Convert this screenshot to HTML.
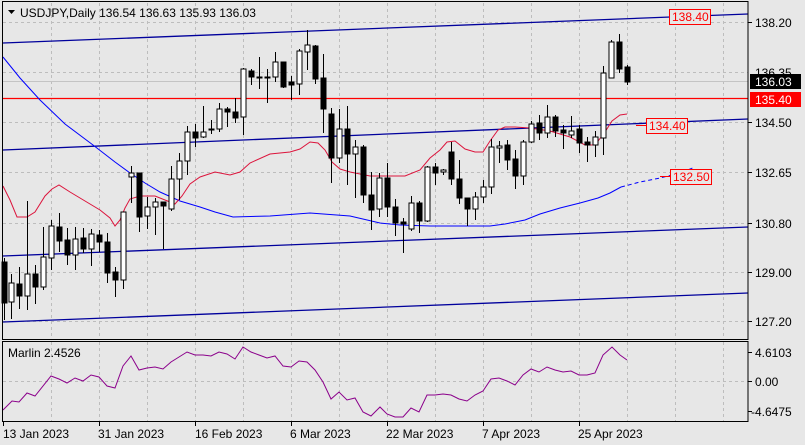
<!DOCTYPE html>
<html><head><meta charset="utf-8"><style>
html,body{margin:0;padding:0;background:#e7e7e7;}
svg{display:block;font-family:"Liberation Sans",sans-serif;}
</style></head><body>
<svg width="805" height="445" viewBox="0 0 805 445" xmlns="http://www.w3.org/2000/svg">
<rect width="805" height="445" fill="#e7e7e7"/>
<g stroke="#bdbdbd" stroke-dasharray="3,3" stroke-width="1">
<line x1="3" y1="22.5" x2="748" y2="22.5"/><line x1="3" y1="72.5" x2="748" y2="72.5"/><line x1="3" y1="122.5" x2="748" y2="122.5"/><line x1="3" y1="172.5" x2="748" y2="172.5"/><line x1="3" y1="223.5" x2="748" y2="223.5"/><line x1="3" y1="272.5" x2="748" y2="272.5"/><line x1="3" y1="321.5" x2="748" y2="321.5"/>
<line x1="3" y1="381.5" x2="748" y2="381.5"/>
<g id="vg"><line x1="51.5" y1="3" x2="51.5" y2="339"/><line x1="99.5" y1="3" x2="99.5" y2="339"/><line x1="147.5" y1="3" x2="147.5" y2="339"/><line x1="195.5" y1="3" x2="195.5" y2="339"/><line x1="243.5" y1="3" x2="243.5" y2="339"/><line x1="291.5" y1="3" x2="291.5" y2="339"/><line x1="339.5" y1="3" x2="339.5" y2="339"/><line x1="387.5" y1="3" x2="387.5" y2="339"/><line x1="435.5" y1="3" x2="435.5" y2="339"/><line x1="483.5" y1="3" x2="483.5" y2="339"/><line x1="531.5" y1="3" x2="531.5" y2="339"/><line x1="579.5" y1="3" x2="579.5" y2="339"/><line x1="627.5" y1="3" x2="627.5" y2="339"/><line x1="675.5" y1="3" x2="675.5" y2="339"/><line x1="723.5" y1="3" x2="723.5" y2="339"/></g>
<line x1="51.5" y1="342" x2="51.5" y2="421"/><line x1="99.5" y1="342" x2="99.5" y2="421"/><line x1="147.5" y1="342" x2="147.5" y2="421"/><line x1="195.5" y1="342" x2="195.5" y2="421"/><line x1="243.5" y1="342" x2="243.5" y2="421"/><line x1="291.5" y1="342" x2="291.5" y2="421"/><line x1="339.5" y1="342" x2="339.5" y2="421"/><line x1="387.5" y1="342" x2="387.5" y2="421"/><line x1="435.5" y1="342" x2="435.5" y2="421"/><line x1="483.5" y1="342" x2="483.5" y2="421"/><line x1="531.5" y1="342" x2="531.5" y2="421"/><line x1="579.5" y1="342" x2="579.5" y2="421"/><line x1="627.5" y1="342" x2="627.5" y2="421"/><line x1="675.5" y1="342" x2="675.5" y2="421"/><line x1="723.5" y1="342" x2="723.5" y2="421"/>
</g>
<line x1="3" y1="81.5" x2="748" y2="81.5" stroke="#c4c4c4"/>
<!-- channel lines -->
<g stroke="#00009c" stroke-width="1.3" fill="none">
<line x1="3" y1="43" x2="748" y2="14"/>
<line x1="3" y1="150" x2="748" y2="119"/>
<line x1="3" y1="256" x2="748" y2="227"/>
<line x1="3" y1="322" x2="748" y2="293"/>
</g>
<line x1="3" y1="98.5" x2="748" y2="98.5" stroke="#ff0000" stroke-width="1.3"/>
<!-- MA -->
<polyline fill="none" stroke="#0000ff" stroke-width="1" points="3,57 20,78 40,100 65,124 93,145 115,162 130,173 145,183 160,192 180,201 200,207 215,212 233,217 270,216 310,213 350,216 380,223 400,225 430,226 460,226 490,226 505,224 525,220 540,214 560,208 580,203 598,198 610,193 621,187"/>
<polyline fill="none" stroke="#0000ff" stroke-width="1" stroke-dasharray="4,3" points="621,187 640,182 660,178 680,173 695,167"/>
<!-- red envelope -->
<polyline fill="none" stroke="#dc143c" stroke-width="1" points="3,186 10,200 17,217 27,217 35,212 45,196 52,189 59,185 70,192 85,201 100,210 110,218 115,226 120,220 125,208 130,199 140,196 155,196 165,200 175,204 182,196 190,184 200,177 215,172 230,175 240,172 250,163 270,154 290,152 300,149 310,142 318,143 325,150 332,162 340,169 350,172 370,176 390,176 405,176 420,170 430,158 440,150 447,142 455,141 465,149 475,152 483,152 490,141 498,130 505,127 515,127 530,128 550,131 570,137 585,145 595,145 605,132 612,121 620,115 627,114"/>
<!-- candles -->
<g stroke="#000" stroke-width="1" id="candles"></g>
<g stroke="#000" stroke-width="1">
<line x1="4.5" y1="258" x2="4.5" y2="320"/><rect x="2" y="262" width="5" height="41" fill="#000"/>
<line x1="11.5" y1="274" x2="11.5" y2="319"/><rect x="9" y="283" width="5" height="19" fill="#fff"/>
<line x1="19.5" y1="267" x2="19.5" y2="309"/><rect x="17" y="284" width="5" height="12" fill="#000"/>
<line x1="27.5" y1="201" x2="27.5" y2="310"/><rect x="25" y="274" width="5" height="22" fill="#fff"/>
<line x1="35.5" y1="265" x2="35.5" y2="304"/><rect x="33" y="274" width="5" height="13" fill="#000"/>
<line x1="43.5" y1="227" x2="43.5" y2="290"/><rect x="41" y="257" width="5" height="30" fill="#fff"/>
<line x1="51.5" y1="220" x2="51.5" y2="270"/><rect x="49" y="226" width="5" height="32" fill="#fff"/>
<line x1="59.5" y1="213" x2="59.5" y2="252"/><rect x="57" y="227" width="5" height="14" fill="#000"/>
<line x1="67.5" y1="228" x2="67.5" y2="265"/><rect x="65" y="240" width="5" height="15" fill="#000"/>
<line x1="75.5" y1="227" x2="75.5" y2="270"/><rect x="73" y="239" width="5" height="16" fill="#fff"/>
<line x1="83.5" y1="228" x2="83.5" y2="253"/><rect x="81" y="238" width="5" height="11" fill="#000"/>
<line x1="91.5" y1="229" x2="91.5" y2="266"/><rect x="89" y="234" width="5" height="15" fill="#fff"/>
<line x1="99.5" y1="230" x2="99.5" y2="252"/><rect x="97" y="235" width="5" height="7" fill="#000"/>
<line x1="107.5" y1="233" x2="107.5" y2="283"/><rect x="105" y="242" width="5" height="31" fill="#000"/>
<line x1="115.5" y1="267" x2="115.5" y2="297"/><rect x="113" y="272" width="5" height="8" fill="#000"/>
<line x1="123.5" y1="212" x2="123.5" y2="289"/><rect x="121" y="212" width="5" height="68" fill="#fff"/>
<line x1="131.5" y1="166" x2="131.5" y2="203"/><rect x="129" y="173" width="5" height="4" fill="#fff"/>
<line x1="139.5" y1="173" x2="139.5" y2="232"/><rect x="137" y="173" width="5" height="44" fill="#000"/>
<line x1="147.5" y1="197" x2="147.5" y2="229"/><rect x="145" y="207" width="5" height="9" fill="#fff"/>
<line x1="155.5" y1="198" x2="155.5" y2="235"/><rect x="153" y="202" width="5" height="5" fill="#fff"/>
<line x1="163.5" y1="202" x2="163.5" y2="249"/><rect x="161" y="202" width="5" height="4" fill="#000"/>
<line x1="171.5" y1="166" x2="171.5" y2="211"/><rect x="169" y="179" width="5" height="30" fill="#fff"/>
<line x1="179.5" y1="153" x2="179.5" y2="200"/><rect x="177" y="161" width="5" height="18" fill="#fff"/>
<line x1="187.5" y1="126" x2="187.5" y2="175"/><rect x="185" y="132" width="5" height="29" fill="#fff"/>
<line x1="195.5" y1="124" x2="195.5" y2="147"/><rect x="193" y="132" width="5" height="6" fill="#000"/>
<line x1="203.5" y1="106" x2="203.5" y2="138"/><rect x="201" y="132" width="5" height="5" fill="#fff"/>
<line x1="211.5" y1="120" x2="211.5" y2="134"/><rect x="209" y="129" width="5" height="1" fill="#fff"/>
<line x1="219.5" y1="103" x2="219.5" y2="132"/><rect x="217" y="109" width="5" height="20" fill="#fff"/>
<line x1="227.5" y1="107" x2="227.5" y2="127"/><rect x="225" y="109" width="5" height="3" fill="#000"/>
<line x1="235.5" y1="98" x2="235.5" y2="123"/><rect x="233" y="112" width="5" height="6" fill="#000"/>
<line x1="243.5" y1="68" x2="243.5" y2="135"/><rect x="241" y="69" width="5" height="48" fill="#fff"/>
<line x1="251.5" y1="69" x2="251.5" y2="85"/><rect x="249" y="71" width="5" height="6" fill="#000"/>
<line x1="259.5" y1="57" x2="259.5" y2="89"/><rect x="257" y="77" width="5" height="1" fill="#fff"/>
<line x1="267.5" y1="69" x2="267.5" y2="103"/><rect x="265" y="77" width="5" height="1" fill="#fff"/>
<line x1="275.5" y1="52" x2="275.5" y2="82"/><rect x="273" y="62" width="5" height="15" fill="#fff"/>
<line x1="283.5" y1="62" x2="283.5" y2="88"/><rect x="281" y="62" width="5" height="25" fill="#000"/>
<line x1="291.5" y1="76" x2="291.5" y2="100"/><rect x="289" y="82" width="5" height="3" fill="#000"/>
<line x1="299.5" y1="49" x2="299.5" y2="95"/><rect x="297" y="51" width="5" height="33" fill="#fff"/>
<line x1="307.5" y1="30" x2="307.5" y2="70"/><rect x="305" y="45" width="5" height="7" fill="#fff"/>
<line x1="315.5" y1="45" x2="315.5" y2="84"/><rect x="313" y="46" width="5" height="33" fill="#000"/>
<line x1="323.5" y1="54" x2="323.5" y2="133"/><rect x="321" y="78" width="5" height="31" fill="#000"/>
<line x1="331.5" y1="108" x2="331.5" y2="183"/><rect x="329" y="114" width="5" height="44" fill="#000"/>
<line x1="339.5" y1="109" x2="339.5" y2="163"/><rect x="337" y="129" width="5" height="29" fill="#fff"/>
<line x1="347.5" y1="106" x2="347.5" y2="185"/><rect x="345" y="129" width="5" height="25" fill="#000"/>
<line x1="355.5" y1="140" x2="355.5" y2="198"/><rect x="353" y="147" width="5" height="7" fill="#fff"/>
<line x1="363.5" y1="145" x2="363.5" y2="203"/><rect x="361" y="147" width="5" height="48" fill="#000"/>
<line x1="371.5" y1="172" x2="371.5" y2="230"/><rect x="369" y="195" width="5" height="15" fill="#000"/>
<line x1="379.5" y1="173" x2="379.5" y2="217"/><rect x="377" y="178" width="5" height="31" fill="#fff"/>
<line x1="387.5" y1="163" x2="387.5" y2="217"/><rect x="385" y="178" width="5" height="29" fill="#000"/>
<line x1="395.5" y1="199" x2="395.5" y2="236"/><rect x="393" y="207" width="5" height="16" fill="#000"/>
<line x1="403.5" y1="218" x2="403.5" y2="253"/><rect x="401" y="222" width="5" height="2" fill="#000"/>
<line x1="411.5" y1="196" x2="411.5" y2="231"/><rect x="409" y="203" width="5" height="26" fill="#fff"/>
<line x1="419.5" y1="201" x2="419.5" y2="233"/><rect x="417" y="203" width="5" height="18" fill="#000"/>
<line x1="427.5" y1="166" x2="427.5" y2="222"/><rect x="425" y="167" width="5" height="54" fill="#fff"/>
<line x1="435.5" y1="163" x2="435.5" y2="185"/><rect x="433" y="167" width="5" height="6" fill="#000"/>
<line x1="443.5" y1="169" x2="443.5" y2="175"/><rect x="441" y="170" width="5" height="2" fill="#fff"/>
<line x1="451.5" y1="142" x2="451.5" y2="185"/><rect x="449" y="152" width="5" height="27" fill="#000"/>
<line x1="459.5" y1="160" x2="459.5" y2="204"/><rect x="457" y="179" width="5" height="19" fill="#000"/>
<line x1="467.5" y1="198" x2="467.5" y2="226"/><rect x="465" y="198" width="5" height="11" fill="#000"/>
<line x1="475.5" y1="192" x2="475.5" y2="220"/><rect x="473" y="197" width="5" height="12" fill="#fff"/>
<line x1="483.5" y1="180" x2="483.5" y2="203"/><rect x="481" y="187" width="5" height="10" fill="#fff"/>
<line x1="491.5" y1="139" x2="491.5" y2="194"/><rect x="489" y="147" width="5" height="40" fill="#fff"/>
<line x1="499.5" y1="141" x2="499.5" y2="163"/><rect x="497" y="146" width="5" height="2" fill="#fff"/>
<line x1="507.5" y1="140" x2="507.5" y2="170"/><rect x="505" y="145" width="5" height="15" fill="#000"/>
<line x1="515.5" y1="150" x2="515.5" y2="189"/><rect x="513" y="159" width="5" height="17" fill="#000"/>
<line x1="523.5" y1="140" x2="523.5" y2="185"/><rect x="521" y="142" width="5" height="34" fill="#fff"/>
<line x1="531.5" y1="121" x2="531.5" y2="143"/><rect x="529" y="124" width="5" height="18" fill="#fff"/>
<line x1="539.5" y1="115" x2="539.5" y2="140"/><rect x="537" y="123" width="5" height="10" fill="#000"/>
<line x1="547.5" y1="105" x2="547.5" y2="138"/><rect x="545" y="117" width="5" height="16" fill="#fff"/>
<line x1="555.5" y1="115" x2="555.5" y2="137"/><rect x="553" y="117" width="5" height="14" fill="#000"/>
<line x1="563.5" y1="125" x2="563.5" y2="149"/><rect x="561" y="130" width="5" height="3" fill="#000"/>
<line x1="571.5" y1="116" x2="571.5" y2="138"/><rect x="569" y="131" width="5" height="4" fill="#fff"/>
<line x1="579.5" y1="125" x2="579.5" y2="153"/><rect x="577" y="129" width="5" height="14" fill="#000"/>
<line x1="587.5" y1="137" x2="587.5" y2="162"/><rect x="585" y="142" width="5" height="3" fill="#000"/>
<line x1="595.5" y1="131" x2="595.5" y2="157"/><rect x="593" y="137" width="5" height="8" fill="#fff"/>
<line x1="603.5" y1="66" x2="603.5" y2="155"/><rect x="601" y="73" width="5" height="65" fill="#fff"/>
<line x1="611.5" y1="40" x2="611.5" y2="78"/><rect x="609" y="42" width="5" height="36" fill="#fff"/>
<line x1="619.5" y1="34" x2="619.5" y2="73"/><rect x="617" y="42" width="5" height="27" fill="#000"/>
<line x1="627.5" y1="65" x2="627.5" y2="85"/><rect x="625" y="67" width="5" height="15" fill="#000"/>
</g>
<!-- labels on chart -->
<g font-size="12" fill="#ff0000">
<rect x="669.5" y="9.5" width="41" height="15" fill="#e7e7e7" stroke="#ff0000"/><text x="672" y="21">138.40</text>
<line x1="636" y1="125.5" x2="646" y2="125.5" stroke="#ff0000"/>
<rect x="646.5" y="118.5" width="41" height="15" fill="#e7e7e7" stroke="#ff0000"/><text x="649" y="130">134.40</text>
<line x1="660" y1="176.5" x2="670" y2="176.5" stroke="#ff0000"/>
<rect x="670.5" y="169.5" width="41" height="15" fill="#e7e7e7" stroke="#ff0000"/><text x="673" y="181">132.50</text>
</g>
<!-- Marlin -->
<polyline fill="none" stroke="#8b008b" stroke-width="1" points="3,410 12,401 19,402 27,393 35,396 51,376 59,379 67,383 75,378 83,381 91,375 99,377 107,386 115,388 123,366 131,356 139,370 147,368 155,367 163,369 171,362 179,357 187,352 195,355 203,355 211,356 219,352 227,354 235,359 243,347 251,352 259,355 267,358 275,356 283,366 291,367 299,361 307,362 315,370 323,382 331,399 339,392 347,400 355,398 363,412 371,416 380,407 387,414 395,417 403,417 411,408 419,412 427,395 435,395 443,394 451,395 459,399 467,401 475,395 483,391 491,379 499,378 507,381 515,385 523,375 531,369 539,372 547,367 555,370 563,372 571,371 579,375 587,375 595,373 603,355 612,347 620,355 627,360"/>
<!-- borders -->
<g stroke="#000" stroke-width="1" fill="none">
<rect x="2.5" y="1.5" width="745.5" height="338"/>
<rect x="2.5" y="341.5" width="745.5" height="80"/>
</g>
<!-- axis ticks -->
<g stroke="#000"><line x1="748" y1="22.5" x2="752" y2="22.5"/><line x1="748" y1="122.5" x2="752" y2="122.5"/><line x1="748" y1="172.5" x2="752" y2="172.5"/><line x1="748" y1="223.5" x2="752" y2="223.5"/><line x1="748" y1="272.5" x2="752" y2="272.5"/><line x1="748" y1="321.5" x2="752" y2="321.5"/><line x1="748" y1="352.5" x2="752" y2="352.5"/><line x1="748" y1="381.5" x2="752" y2="381.5"/><line x1="748" y1="411.5" x2="752" y2="411.5"/>
<line x1="3.5" y1="422" x2="3.5" y2="426"/><line x1="99.5" y1="422" x2="99.5" y2="426"/><line x1="195.5" y1="422" x2="195.5" y2="426"/><line x1="291.5" y1="422" x2="291.5" y2="426"/><line x1="387.5" y1="422" x2="387.5" y2="426"/><line x1="483.5" y1="422" x2="483.5" y2="426"/><line x1="579.5" y1="422" x2="579.5" y2="426"/></g>
<g font-size="12" fill="#000">
<text x="755" y="27">138.20</text>
<text x="755" y="77">136.35</text>
<text x="755" y="127">134.50</text>
<text x="755" y="177">132.65</text>
<text x="755" y="228">130.80</text>
<text x="755" y="277">129.00</text>
<text x="755" y="326">127.20</text>
<text x="755" y="357">4.6103</text>
<text x="755" y="386">0.00</text>
<text x="751" y="416">-4.6475</text>
</g>
<rect x="750" y="74" width="51" height="15" fill="#000"/><text x="755" y="86" font-size="12" fill="#fff">136.03</text>
<rect x="750" y="92" width="51" height="15" fill="#ff0000"/><text x="755" y="104" font-size="12" fill="#fff">135.40</text>
<g font-size="12" fill="#000">
<text x="3" y="438">13 Jan 2023</text>
<text x="98" y="438">31 Jan 2023</text>
<text x="195" y="438">16 Feb 2023</text>
<text x="290" y="438">6 Mar 2023</text>
<text x="386" y="438">22 Mar 2023</text>
<text x="482" y="438">7 Apr 2023</text>
<text x="578" y="438">25 Apr 2023</text>
</g>
<polygon points="8,10 15,10 11.5,14" fill="#000"/>
<text x="20" y="17" font-size="12" fill="#000">USDJPY,Daily  136.54 136.63 135.93 136.03</text>
<text x="8" y="357" font-size="12" fill="#000">Marlin 2.4526</text>
</svg>
</body></html>
